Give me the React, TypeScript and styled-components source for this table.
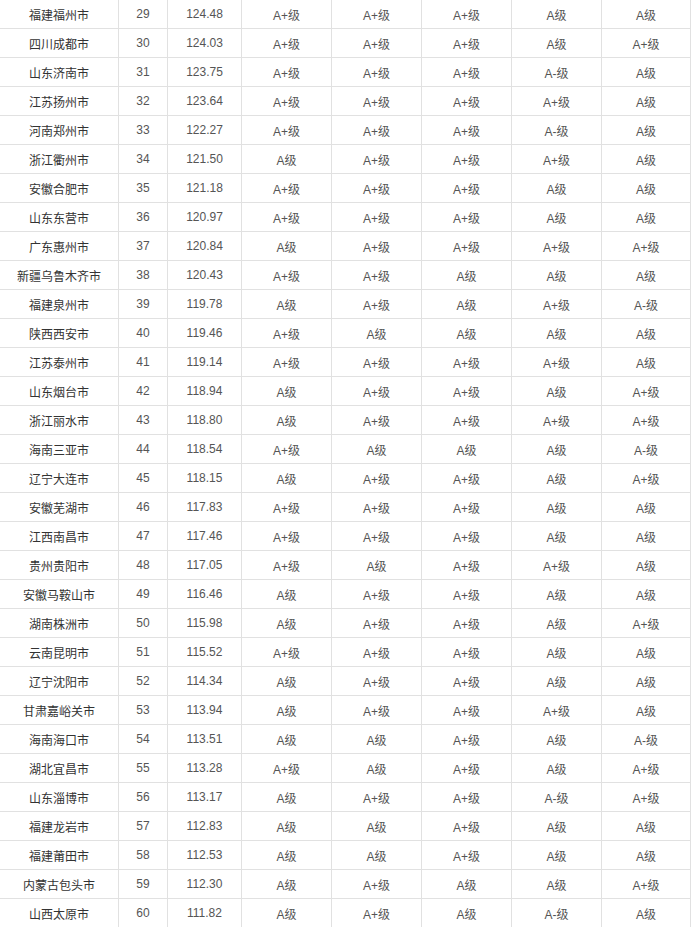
import React from "react";
import styled, { createGlobalStyle } from "styled-components";

type Row = [string, number, string, string, string, string, string, string];

const rows: Row[] = [
	["福建福州市", 29, "124.48", "A+级", "A+级", "A+级", "A级", "A级"],
	["四川成都市", 30, "124.03", "A+级", "A+级", "A+级", "A级", "A+级"],
	["山东济南市", 31, "123.75", "A+级", "A+级", "A+级", "A-级", "A级"],
	["江苏扬州市", 32, "123.64", "A+级", "A+级", "A+级", "A+级", "A级"],
	["河南郑州市", 33, "122.27", "A+级", "A+级", "A+级", "A-级", "A级"],
	["浙江衢州市", 34, "121.50", "A级", "A+级", "A+级", "A+级", "A级"],
	["安徽合肥市", 35, "121.18", "A+级", "A+级", "A+级", "A级", "A级"],
	["山东东营市", 36, "120.97", "A+级", "A+级", "A+级", "A级", "A级"],
	["广东惠州市", 37, "120.84", "A级", "A+级", "A+级", "A+级", "A+级"],
	["新疆乌鲁木齐市", 38, "120.43", "A+级", "A+级", "A级", "A级", "A级"],
	["福建泉州市", 39, "119.78", "A级", "A+级", "A级", "A+级", "A-级"],
	["陕西西安市", 40, "119.46", "A+级", "A级", "A级", "A级", "A级"],
	["江苏泰州市", 41, "119.14", "A+级", "A+级", "A+级", "A+级", "A级"],
	["山东烟台市", 42, "118.94", "A级", "A+级", "A+级", "A级", "A+级"],
	["浙江丽水市", 43, "118.80", "A级", "A+级", "A+级", "A+级", "A+级"],
	["海南三亚市", 44, "118.54", "A+级", "A级", "A级", "A级", "A-级"],
	["辽宁大连市", 45, "118.15", "A级", "A+级", "A+级", "A级", "A+级"],
	["安徽芜湖市", 46, "117.83", "A+级", "A+级", "A+级", "A级", "A级"],
	["江西南昌市", 47, "117.46", "A+级", "A+级", "A+级", "A级", "A级"],
	["贵州贵阳市", 48, "117.05", "A+级", "A级", "A+级", "A+级", "A级"],
	["安徽马鞍山市", 49, "116.46", "A级", "A+级", "A+级", "A级", "A级"],
	["湖南株洲市", 50, "115.98", "A级", "A+级", "A+级", "A级", "A+级"],
	["云南昆明市", 51, "115.52", "A+级", "A+级", "A+级", "A级", "A级"],
	["辽宁沈阳市", 52, "114.34", "A级", "A+级", "A+级", "A级", "A级"],
	["甘肃嘉峪关市", 53, "113.94", "A级", "A+级", "A+级", "A+级", "A级"],
	["海南海口市", 54, "113.51", "A级", "A级", "A+级", "A级", "A-级"],
	["湖北宜昌市", 55, "113.28", "A+级", "A级", "A+级", "A级", "A+级"],
	["山东淄博市", 56, "113.17", "A级", "A+级", "A+级", "A-级", "A+级"],
	["福建龙岩市", 57, "112.83", "A级", "A级", "A+级", "A级", "A级"],
	["福建莆田市", 58, "112.53", "A级", "A级", "A+级", "A级", "A级"],
	["内蒙古包头市", 59, "112.30", "A级", "A+级", "A级", "A级", "A+级"],
	["山西太原市", 60, "111.82", "A级", "A+级", "A级", "A-级", "A级"],
];

function App() {
	return (
		<>
			<GlobalStyle />
			<Table>
				{rows.map((row) => (
					<TableRow key={row[1]}>
						<Cell $strong>{row[0]}</Cell>
						<Cell>{row[1]}</Cell>
						<Cell>{row[2]}</Cell>
						{row.slice(3).map((grade, i) => (
							<Cell key={i}>{grade}</Cell>
						))}
					</TableRow>
				))}
			</Table>
		</>
	);
}

const GlobalStyle = createGlobalStyle`
	html, body {
		margin: 0;
		padding: 0;
		background: #fff;
	}
	body {
		font-family: "Liberation Sans", "Noto Sans CJK SC", sans-serif;
		overflow: hidden;
	}
`;

const Table = styled.div`
	width: 691px;
	display: flex;
	flex-direction: column;
`;

const TableRow = styled.div`
	display: grid;
	grid-template-columns: 119px 49px 74px 90px 90px 90px 90px 89px;
	height: 29px;
	box-sizing: border-box;
	border-bottom: 1px solid #e1e1e1;
`;

const Cell = styled.div<{ $strong?: boolean }>`
	display: flex;
	align-items: center;
	justify-content: center;
	border-right: 1px solid #e1e1e1;
	font-size: 12px;
	color: ${(p) => (p.$strong ? "#333" : "#555")};
	white-space: nowrap;
`;

export default App;
